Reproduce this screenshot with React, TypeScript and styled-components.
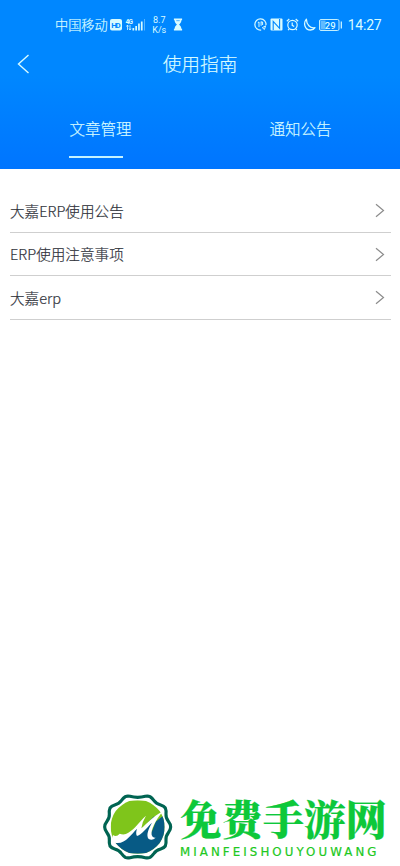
import React from "react";
import styled, { createGlobalStyle } from "styled-components";

const Global = createGlobalStyle`
  * { box-sizing: border-box; }
  body { margin: 0; background: #fff; font-family: "Noto Sans CJK SC", "Noto Sans", sans-serif; }
`;

const Page = styled.div`
  width: 400px;
  height: 866px;
  display: flex;
  flex-direction: column;
  background: #fff;
  overflow: hidden;
  font-weight: 300;
  -webkit-text-stroke: 0.2px currentColor;
`;

const Header = styled.header`
  height: 169px;
  flex: none;
  color: #d8fbff;
  background: linear-gradient(#0087ff 0%, #0087ff 45%, #0075ff 100%);
`;

const StatusBar = styled.div`
  height: 48px;
  padding: 1px 18.5px 0 55px;
  display: flex;
  align-items: center;
  justify-content: space-between;
`;

const StatusGroup = styled.div<{ $gap: number }>`
  display: flex;
  align-items: center;
  gap: ${(p) => p.$gap}px;
  svg { display: block; flex: none; -webkit-text-stroke: 0; }
`;

const Carrier = styled.span`
  font-size: 13.2px;
  line-height: 18px;
  white-space: nowrap;
`;

const Speed = styled.span`
  width: 17px;
  margin: 0 3px 0 4px;
  font: 9px/10px Roboto, sans-serif;
  text-align: center;
  -webkit-text-stroke: 0;
`;

const Clock = styled.span`
  margin-left: 1px;
  font: 14px/18px Roboto, sans-serif;
  letter-spacing: -0.2px;
  -webkit-text-stroke: 0;
`;

const TitleBar = styled.div`
  height: 32px;
  display: grid;
  grid-template-columns: 60px 1fr 60px;
  align-items: center;
`;

const Back = styled.button`
  border: 0;
  padding: 0 0 0 17px;
  background: none;
  color: inherit;
  height: 20px;
  svg { display: block; }
`;

const Title = styled.h1`
  margin: 0;
  font-size: 18.7px;
  line-height: 28px;
  font-weight: 300;
  text-align: center;
  transform: translateY(-1px);
`;

const Tabs = styled.nav`
  margin-top: 36px;
  display: grid;
  grid-template-columns: 1fr 1fr;
`;

const Tab = styled.div<{ $active?: boolean }>`
  font-size: 15.5px;
  line-height: 24px;
  padding-left: 69.5px;
  &::after {
    content: "";
    display: block;
    width: 54px;
    height: 1.5px;
    margin: 16px 0 0 -0.5px;
    background: ${(p) => (p.$active ? "#c4f2ff" : "transparent")};
  }
`;

const List = styled.main`
  flex: 1;
  padding: 20.5px 9px 0 10px;
`;

const Row = styled.div`
  height: 43.45px;
  display: flex;
  align-items: center;
  justify-content: space-between;
  border-bottom: 1px solid #cfcfcf;
  padding-right: 6px;
  font-size: 14.6px;
  line-height: 20px;
  color: #30333b;
  svg { display: block; }
`;

const Brand = styled.footer`
  height: 81px;
  padding-left: 95px;
  display: flex;
  svg { flex: none; display: block; }
`;

const BrandText = styled.div`
  display: flex;
  flex-direction: column;
  white-space: nowrap;
`;

const BrandName = styled.div`
  height: 60px;
  padding-top: 11px;
  font: 900 41.4px/42px "Noto Serif CJK SC", "Noto Sans CJK SC", serif;
  color: #0dc83a;
`;

const BrandLatin = styled.div`
  font: 400 11.8px/14px "DejaVu Sans", sans-serif;
  letter-spacing: 3.08px;
  color: #20c820;
`;

const SignalIcons = () => (
  <svg width="35" height="14" viewBox="0 0 35 14" fill="currentColor">
    <rect x="0" y="1" width="12" height="11.5" rx="2" />
    <text x="1.3" y="9.6" fontSize="8" fontWeight="700" fontFamily="Roboto" fill="#0087ff" textLength="9.4">HD</text>
    <text x="15.5" y="6" fontSize="6.5" fontWeight="700" fontFamily="Roboto" textLength="7.5">4G</text>
    <path d="M17.5 7v5M16.5 8.5l1-1.5 1 1.5M20 7v5M19 10.5l1 1.5 1-1.5" stroke="currentColor" strokeWidth=".8" fill="none" />
    <path d="M22.5 10h1.7v2.5h-1.7zM25.3 8H27v4.5h-1.7zM28.1 5.5h1.7v7h-1.7zM30.9 3.5h1.7v9h-1.7z" />
    <path d="M34 1h.8v11.5H34z" opacity=".5" />
  </svg>
);

const Hourglass = () => (
  <svg width="10" height="13" viewBox="0 0 11 13" fill="currentColor">
    <path d="M1 0h9v1.7H9.2C9.2 4 8 5.2 6.7 6.5 8 7.8 9.2 9 9.2 11.3h.8V13H1v-1.7h.8C1.800 9 3 7.800 4.300 6.500 3 5.200 1.800 4 1.800 1.700H1z" />
    <path d="M3.6 2.3h3.800" stroke="#0087ff" strokeWidth=".7" />
  </svg>
);

const PowerSaver = () => (
  <svg width="13" height="13" viewBox="0 0 13 13" fill="none" stroke="currentColor" strokeWidth="1.2">
    <path d="M7.200 12A5.600 5.600 0 1 1 12 7.200" />
    <path d="M3.800 4.700L5 4v5M7.100 3.500v4.300M7.100 4h1.500v3M8.300 9.700l3.300-1.900-1.200 3.700z" strokeWidth="1" />
  </svg>
);

const Nfc = () => (
  <svg width="13" height="13" viewBox="0 0 13 13">
    <rect x=".5" y=".5" width="12" height="12" rx="1" fill="currentColor" />
    <path d="M3.200 12V3.300l6.400 7V1" stroke="#0087ff" strokeWidth="1.100" fill="none" />
  </svg>
);

const Alarm = () => (
  <svg width="13" height="13" viewBox="0 0 13 13" fill="none" stroke="currentColor" strokeWidth="1.200">
    <circle cx="6.500" cy="7" r="4.700" />
    <path d="M6.200 4.500v2.800l2 1.200M.8 3.200L3.300 1M12.200 3.200L9.700 1M3.200 10.800l-1.100 1.400M9.800 10.800l1.100 1.400" />
  </svg>
);

const Moon = () => (
  <svg width="13" height="13" viewBox="0 0 13 13" fill="none" stroke="currentColor" strokeWidth="1.300" strokeLinejoin="round">
    <path d="M3.400 1.200C-.2 5.500 2 12 7.500 12c2 0 3.700-1 4.500-2.300C7 10.500 3.500 6.500 3.400 1.200z" />
  </svg>
);

const Battery = () => (
  <svg width="24" height="12" viewBox="0 0 24 12">
    <rect x=".5" y=".5" width="19.500" height="11" rx="1.500" fill="none" stroke="currentColor" strokeWidth=".9" />
    <rect x="1.500" y="1.500" width="5" height="9" fill="currentColor" opacity=".45" />
    <path d="M22.300 2.500v7" stroke="currentColor" strokeWidth="1.200" />
    <text x="5.700" y="9.500" fontSize="9.500" fontWeight="500" fontFamily="Roboto" fill="currentColor" textLength="11">29</text>
  </svg>
);

const Chevron = () => (
  <svg width="10" height="15" viewBox="0 0 10 15" fill="none" stroke="#8c8c8c" strokeWidth="1.200">
    <path d="M1 1.200l7.500 6.300L1 13.800" />
  </svg>
);

const Emblem = () => (
  <svg width="85" height="81" viewBox="0 0 255 243">
    <clipPath id="disc">
      <path d="M103 48Q128 44 153 48Q177 58 194 78Q209 101 209 126Q209 152 194 174Q177 195 153 204Q128 208 103 204Q79 195 62 174Q47 152 47 126Q47 101 62 78Q79 58 103 48Z" />
    </clipPath>
    <path
      d="M91 35Q97 32 105 34Q128 40 151 34Q159 32 165 35Q171 39 177 47Q183 56 197 60Q207 63 211 69Q214 76 213 87Q212 99 220 109Q227 118 227 126Q227 134 220 143Q212 153 213 165Q214 176 211 183Q207 189 197 192Q183 196 177 205Q171 213 165 217Q159 220 151 218Q128 212 105 218Q97 220 91 217Q85 213 79 205Q73 196 59 192Q49 189 45 183Q42 176 43 165Q44 153 36 143Q29 134 29 126Q29 118 36 109Q44 99 43 87Q42 76 45 69Q49 63 59 60Q73 56 79 47Q85 39 91 35Z"
      fill="#fff" stroke="#006452" strokeWidth="9.500" strokeLinejoin="round"
    />
    <g clipPath="url(#disc)">
      <path d="M45 42h168v168H45z" fill="#7fc51b" />
      <path d="M50 174C92 174 103 148 122 132L143 107L133 139L178 93L168 147L182 110L215 84V212H50Z" fill="#075a85" />
    </g>
    <path
      d="M54 150Q64 158 74 146Q88 152 100 143C121 130 132 111 153 92Q141 111 139 130C156 115 174 94 202 80C183 105 167 133 170 150Q173 160 182 158Q172 168 161 162C152 149 161 132 171 113C153 130 142 147 126 153Q121 146 126 131C108 148 89 181 59 173Q50 165 54 150Z"
      fill="#fff"
    />
  </svg>
);

const articles = ["大嘉ERP使用公告", "ERP使用注意事项", "大嘉erp"];

export default function App() {
  return (
    <Page>
      <Global />
      <Header>
        <StatusBar>
          <StatusGroup $gap={2}>
            <Carrier>中国移动</Carrier>
            <SignalIcons />
            <Speed>8.7 K/s</Speed>
            <Hourglass />
          </StatusGroup>
          <StatusGroup $gap={3.4}>
            <PowerSaver />
            <Nfc />
            <Alarm />
            <Moon />
            <Battery />
            <Clock>14:27</Clock>
          </StatusGroup>
        </StatusBar>
        <TitleBar>
          <Back aria-label="返回">
            <svg width="13" height="20" viewBox="0 0 13 20" fill="none" stroke="currentColor" strokeWidth="1.400">
              <path d="M11.500 1L1.500 10l10 9" />
            </svg>
          </Back>
          <Title>使用指南</Title>
        </TitleBar>
        <Tabs>
          <Tab $active>文章管理</Tab>
          <Tab>通知公告</Tab>
        </Tabs>
      </Header>
      <List>
        {articles.map((name) => (
          <Row key={name}>
            {name}
            <Chevron />
          </Row>
        ))}
      </List>
      <Brand>
        <Emblem />
        <BrandText>
          <BrandName>免费手游网</BrandName>
          <BrandLatin>MIANFEISHOUYOUWANG</BrandLatin>
        </BrandText>
      </Brand>
    </Page>
  );
}
